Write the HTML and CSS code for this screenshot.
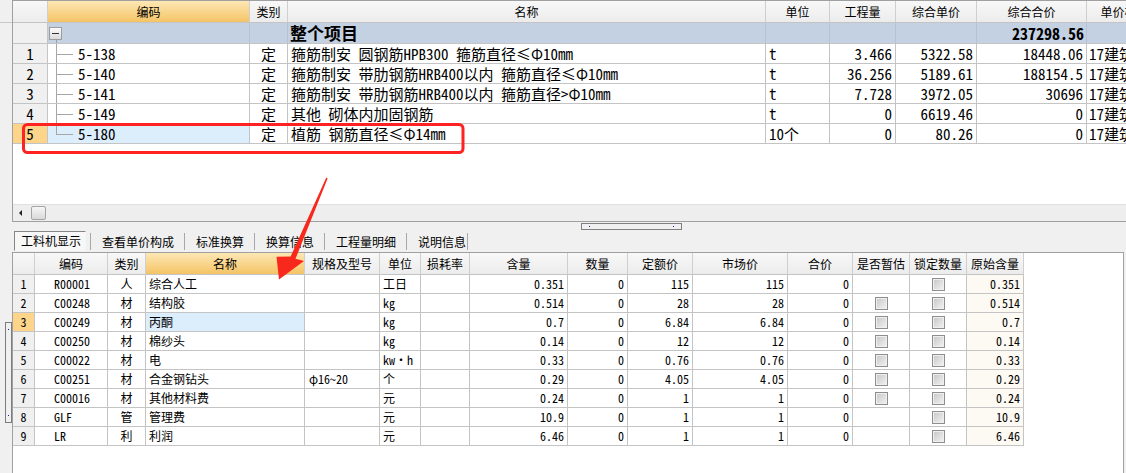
FILE: index.html
```html
<!DOCTYPE html>
<html lang="zh-CN">
<head>
<meta charset="utf-8">
<title>工料机显示</title>
<link rel="stylesheet" href="styles.css">
</head>
<body>
<div class="app">
  <div class="top">
    <div class="strip"><div class="strip-head"></div></div>
    <div class="top-main">
      <div class="top-grid">
        <div class="trow head">
          <div class="c"></div>
          <div class="c hsel">编码</div>
          <div class="c">类别</div>
          <div class="c">名称</div>
          <div class="c">单位</div>
          <div class="c">工程量</div>
          <div class="c">综合单价</div>
          <div class="c">综合合价</div>
          <div class="c">单价构成文件</div>
        </div>
        <div class="trow sum">
          <div class="c num"></div>
          <div class="c tree-root"><span class="minus"><span class="minus-bar"></span></span></div>
          <div class="c"></div>
          <div class="c title">整个项目</div>
          <div class="c"></div>
          <div class="c"></div>
          <div class="c"></div>
          <div class="c r total">237298.56</div>
          <div class="c"></div>
        </div>
        <div class="trow">
          <div class="c num">1</div>
          <div class="c tree">5-138</div>
          <div class="c ctr">定</div>
          <div class="c">箍筋制安 圆钢筋HPB300 箍筋直径≤Φ10mm</div>
          <div class="c">t</div>
          <div class="c r">3.466</div>
          <div class="c r">5322.58</div>
          <div class="c r">18448.06</div>
          <div class="c lt">17建筑装饰工程</div>
        </div>
        <div class="trow">
          <div class="c num">2</div>
          <div class="c tree">5-140</div>
          <div class="c ctr">定</div>
          <div class="c">箍筋制安 带肋钢筋HRB400以内 箍筋直径≤Φ10mm</div>
          <div class="c">t</div>
          <div class="c r">36.256</div>
          <div class="c r">5189.61</div>
          <div class="c r">188154.5</div>
          <div class="c lt">17建筑装饰工程</div>
        </div>
        <div class="trow">
          <div class="c num">3</div>
          <div class="c tree">5-141</div>
          <div class="c ctr">定</div>
          <div class="c">箍筋制安 带肋钢筋HRB400以内 箍筋直径&gt;Φ10mm</div>
          <div class="c">t</div>
          <div class="c r">7.728</div>
          <div class="c r">3972.05</div>
          <div class="c r">30696</div>
          <div class="c lt">17建筑装饰工程</div>
        </div>
        <div class="trow">
          <div class="c num">4</div>
          <div class="c tree">5-149</div>
          <div class="c ctr">定</div>
          <div class="c">其他 砌体内加固钢筋</div>
          <div class="c">t</div>
          <div class="c r">0</div>
          <div class="c r">6619.46</div>
          <div class="c r">0</div>
          <div class="c lt">17建筑装饰工程</div>
        </div>
        <div class="trow">
          <div class="c num cur">5</div>
          <div class="c tree last sel">5-180</div>
          <div class="c ctr">定</div>
          <div class="c">植筋 钢筋直径≤Φ14mm</div>
          <div class="c">10个</div>
          <div class="c r">0</div>
          <div class="c r">80.26</div>
          <div class="c r">0</div>
          <div class="c lt">17建筑装饰工程</div>
        </div>
      </div>
      <div class="hscroll"><span class="sarrow"></span><span class="thumb"></span></div>
    </div>
  </div>

  <div class="splitter"><span class="hhandle"><i class="dot"></i><i class="dot"></i></span></div>

  <div class="tabs">
    <span class="tab active">工料机显示</span>
    <span class="tab">查看单价构成</span>
    <span class="tab">标准换算</span>
    <span class="tab">换算信息</span>
    <span class="tab">工程量明细</span>
    <span class="tab last">说明信息</span>
  </div>

  <div class="bottom">
    <div class="strip"><span class="vhandle"><i class="dot"></i><i class="dot"></i></span></div>
    <div class="bottom-main">
      <div class="brow head">
        <div class="c"></div>
        <div class="c">编码</div>
        <div class="c">类别</div>
        <div class="c hsel">名称</div>
        <div class="c">规格及型号</div>
        <div class="c">单位</div>
        <div class="c">损耗率</div>
        <div class="c">含量</div>
        <div class="c">数量</div>
        <div class="c">定额价</div>
        <div class="c">市场价</div>
        <div class="c">合价</div>
        <div class="c">是否暂估</div>
        <div class="c">锁定数量</div>
        <div class="c">原始含量</div>
      </div>
      <div class="brow">
        <div class="c num">1</div><div class="c code">R00001</div><div class="c ctr">人</div><div class="c">综合人工</div><div class="c spec"></div><div class="c">工日</div><div class="c"></div>
        <div class="c r">0.351</div><div class="c r">0</div><div class="c r">115</div><div class="c r">115</div><div class="c r">0</div>
        <div class="c"></div><div class="c"><span class="chk"></span></div><div class="c r orig">0.351</div>
      </div>
      <div class="brow">
        <div class="c num">2</div><div class="c code">C00248</div><div class="c ctr">材</div><div class="c">结构胶</div><div class="c spec"></div><div class="c">kg</div><div class="c"></div>
        <div class="c r">0.514</div><div class="c r">0</div><div class="c r">28</div><div class="c r">28</div><div class="c r">0</div>
        <div class="c"><span class="chk"></span></div><div class="c"><span class="chk"></span></div><div class="c r orig">0.514</div>
      </div>
      <div class="brow">
        <div class="c num cur">3</div><div class="c code">C00249</div><div class="c ctr">材</div><div class="c sel">丙酮</div><div class="c spec"></div><div class="c">kg</div><div class="c"></div>
        <div class="c r">0.7</div><div class="c r">0</div><div class="c r">6.84</div><div class="c r">6.84</div><div class="c r">0</div>
        <div class="c"><span class="chk"></span></div><div class="c"><span class="chk"></span></div><div class="c r orig">0.7</div>
      </div>
      <div class="brow">
        <div class="c num">4</div><div class="c code">C00250</div><div class="c ctr">材</div><div class="c">棉纱头</div><div class="c spec"></div><div class="c">kg</div><div class="c"></div>
        <div class="c r">0.14</div><div class="c r">0</div><div class="c r">12</div><div class="c r">12</div><div class="c r">0</div>
        <div class="c"><span class="chk"></span></div><div class="c"><span class="chk"></span></div><div class="c r orig">0.14</div>
      </div>
      <div class="brow">
        <div class="c num">5</div><div class="c code">C00022</div><div class="c ctr">材</div><div class="c">电</div><div class="c spec"></div><div class="c">kw・h</div><div class="c"></div>
        <div class="c r">0.33</div><div class="c r">0</div><div class="c r">0.76</div><div class="c r">0.76</div><div class="c r">0</div>
        <div class="c"><span class="chk"></span></div><div class="c"><span class="chk"></span></div><div class="c r orig">0.33</div>
      </div>
      <div class="brow">
        <div class="c num">6</div><div class="c code">C00251</div><div class="c ctr">材</div><div class="c">合金钢钻头</div><div class="c spec">φ16~20</div><div class="c">个</div><div class="c"></div>
        <div class="c r">0.29</div><div class="c r">0</div><div class="c r">4.05</div><div class="c r">4.05</div><div class="c r">0</div>
        <div class="c"><span class="chk"></span></div><div class="c"><span class="chk"></span></div><div class="c r orig">0.29</div>
      </div>
      <div class="brow">
        <div class="c num">7</div><div class="c code">C00016</div><div class="c ctr">材</div><div class="c">其他材料费</div><div class="c spec"></div><div class="c">元</div><div class="c"></div>
        <div class="c r">0.24</div><div class="c r">0</div><div class="c r">1</div><div class="c r">1</div><div class="c r">0</div>
        <div class="c"><span class="chk"></span></div><div class="c"><span class="chk"></span></div><div class="c r orig">0.24</div>
      </div>
      <div class="brow">
        <div class="c num">8</div><div class="c code">GLF</div><div class="c ctr">管</div><div class="c">管理费</div><div class="c spec"></div><div class="c">元</div><div class="c"></div>
        <div class="c r">10.9</div><div class="c r">0</div><div class="c r">1</div><div class="c r">1</div><div class="c r">0</div>
        <div class="c"></div><div class="c"><span class="chk"></span></div><div class="c r orig">10.9</div>
      </div>
      <div class="brow">
        <div class="c num">9</div><div class="c code">LR</div><div class="c ctr">利</div><div class="c">利润</div><div class="c spec"></div><div class="c">元</div><div class="c"></div>
        <div class="c r">6.46</div><div class="c r">0</div><div class="c r">1</div><div class="c r">1</div><div class="c r">0</div>
        <div class="c"></div><div class="c"><span class="chk"></span></div><div class="c r orig">6.46</div>
      </div>
    </div>
  </div>
</div>

<svg class="overlay" width="1126" height="473" viewBox="0 0 1126 473" aria-hidden="true">
  <rect x="23.5" y="124.5" width="439.5" height="28" rx="4" ry="4" fill="none" stroke="#ff2222" stroke-width="3"/>
  <polygon points="326.3,177.6 327.6,178.4 295.5,258.8 304,261 279,279.5 276.5,256.8 290.6,256.6" fill="#f8291c"/>
</svg>
</body>
</html>
```

FILE: styles.css
```css
* { box-sizing: border-box; }

body {
  margin: 0;
  width: 1126px;
  height: 473px;
  overflow: hidden;
  position: relative;
  background: #f0f0f0;
  color: #000;
  font-family: "Noto Sans CJK SC", sans-serif;
  font-size: 12px;
}

.app {
  display: flex;
  flex-direction: column;
  height: 473px;
}

/* ---------- top panel ---------- */
.top {
  display: flex;
  height: 222px;
  flex: none;
}

.strip {
  width: 12px;
  flex: none;
}

.strip-head {
  height: 23px;
  border-bottom: 1px solid #c8c8c8;
}

.top-main {
  flex: 1;
  min-width: 0;
  display: flex;
  flex-direction: column;
  background: #fff;
  border-top: 1px solid #a0a0a0;
  border-bottom: 1px solid #a0a0a0;
  border-left: 1px solid #a0a0a0;
  overflow: hidden;
}

.top-grid {
  flex: 1;
  min-height: 0;
  overflow: hidden;
  font-family: "Noto Sans Mono CJK SC", "Noto Sans CJK SC", monospace;
  font-size: 15px;
}

.trow {
  display: grid;
  grid-template-columns: 35px 202px 38px 478px 64px 66px 81px 110px 100px;
  height: 20px;
}

.c {
  border-right: 1px solid #c4c4c4;
  border-bottom: 1px solid #c4c4c4;
  overflow: hidden;
  white-space: nowrap;
  padding: 0 3px;
  line-height: 19px;
}

.r { text-align: right; }
.ctr { text-align: center; }
.lt { padding-left: 2px; }

.num {
  background: #f0f0f0;
  text-align: center;
  padding: 0;
}

.num.cur { background: #fcd58b; }
.sel { background-color: #dcedfc; }

.trow.head {
  height: 22px;
}

.trow.head .c,
.brow.head .c {
  background: linear-gradient(#f8f8f8, #ececec);
  font-family: "Noto Sans CJK SC", sans-serif;
  font-size: 12px;
  text-align: center;
  line-height: 21px;
  border-right-color: #cfcfcf;
  border-bottom-color: #c4c4c4;
}

.trow.head .c.hsel,
.brow.head .c.hsel {
  background: linear-gradient(#fde7b4, #f4c466);
}

.trow.sum {
  height: 21px;
}

.trow.sum .c {
  background: #c4d1e2;
  line-height: 20px;
  border-right-color: #b7c3d3;
}

.trow.sum .c.num {
  background: #f0f0f0;
  border-right-color: #c4c4c4;
}

.trow.sum .title {
  font-weight: bold;
  font-size: 17px;
  padding-left: 2px;
  overflow: visible;
}

.trow.sum .total {
  font-weight: bold;
  font-size: 16px;
  padding-right: 2px;
  overflow: visible;
}

.trow.sum .tree-root {
  padding: 4px 0 0 1px;
  background:
    linear-gradient(#a0a0a0, #a0a0a0) 8px 17px / 1px 4px no-repeat,
    #c4d1e2;
}

.minus {
  display: block;
  width: 13px;
  height: 13px;
  border: 1px solid #9c9c9c;
  background: linear-gradient(#fbfbfb, #dadada);
  padding-top: 5px;
}

.minus-bar {
  display: block;
  width: 7px;
  height: 1px;
  margin: 0 auto;
  background: #333;
}

.tree {
  padding-left: 30px;
  background:
    linear-gradient(#a6a6a6, #a6a6a6) 8px 0 / 1px 100% no-repeat,
    linear-gradient(#a6a6a6, #a6a6a6) 8px 10px / 17px 1px no-repeat;
}

.tree.last {
  background:
    linear-gradient(#a6a6a6, #a6a6a6) 8px 0 / 1px 11px no-repeat,
    linear-gradient(#a6a6a6, #a6a6a6) 8px 10px / 17px 1px no-repeat,
    #dcedfc;
}

.hscroll {
  height: 17px;
  flex: none;
  background: #eeeeee;
  border-top: 1px solid #e0e0e0;
  display: flex;
  align-items: center;
}

.sarrow {
  margin-left: 6px;
  width: 0;
  height: 0;
  border-top: 3px solid transparent;
  border-bottom: 3px solid transparent;
  border-right: 3px solid #222;
}

.thumb {
  margin-left: 9px;
  width: 15px;
  height: 14px;
  border: 1px solid #a4a4a4;
  border-radius: 2px;
  background: linear-gradient(#f6f6f6, #d9d9d9);
}

/* ---------- splitter ---------- */
.splitter {
  height: 8px;
  flex: none;
}

.hhandle {
  display: flex;
  justify-content: space-between;
  align-items: center;
  margin: 1px 0 0 581px;
  width: 101px;
  height: 7px;
  border: 1px solid #808080;
  padding: 0 7px;
}

.dot {
  display: block;
  width: 1px;
  height: 1px;
  background: #1a1aa0;
}

/* ---------- tabs ---------- */
.tabs {
  height: 22px;
  flex: none;
  display: flex;
  align-items: center;
  padding-left: 14px;
}

.tab {
  height: 17px;
  line-height: 17px;
  padding: 0 10px 0 11px;
  border-left: 1px solid #a8a8a8;
  white-space: nowrap;
}

.tab.active {
  height: 20px;
  line-height: 18px;
  width: 72px;
  padding: 0 0 0 6px;
  margin-right: 4px;
  border: 1px solid;
  border-color: #858585 #f6f6f6 #f6f6f6 #858585;
  background: #f7f7f7;
}

.tab.last {
  padding-right: 1px;
  border-right: 1px solid #a8a8a8;
}

/* ---------- bottom panel ---------- */
.bottom {
  flex: 1;
  min-height: 0;
  display: flex;
}

.bottom .strip {
  display: flex;
  flex-direction: column;
}

.vhandle {
  display: flex;
  flex-direction: column;
  justify-content: space-between;
  align-items: center;
  margin: 70px 0 0 5px;
  width: 7px;
  height: 101px;
  border: 1px solid #7c7c7c;
  padding: 6px 0;
}

.bottom-main {
  width: 1112px;
  flex: none;
  background: #fff;
  border-top: 1px solid #a0a0a0;
  border-left: 1px solid #a0a0a0;
  border-right: 1px solid #a0a0a0;
  font-family: "Noto Sans Mono CJK SC", "Noto Sans CJK SC", monospace;
  font-size: 12px;
}

.brow {
  display: grid;
  grid-template-columns: 22px 73px 38px 159px 75px 41px 49px 98px 60px 65px 95px 65px 57px 57px 57px;
  height: 19px;
}

.brow .c {
  line-height: 18px;
}

.brow.head {
  height: 22px;
}

.brow .code { padding-left: 19px; }
.brow .spec { padding-left: 4px; }
.brow .orig { background: #fdf9f3; }

.chk {
  display: block;
  width: 13px;
  height: 13px;
  margin: 3px auto 0;
  border: 1px solid #8e8e8e;
  background: linear-gradient(135deg, #c6c6c6, #f3f3f3);
  box-shadow: inset 0 0 0 1px #efefef;
}

/* ---------- annotation overlay ---------- */
.overlay {
  position: absolute;
  left: 0;
  top: 0;
  pointer-events: none;
}
```
